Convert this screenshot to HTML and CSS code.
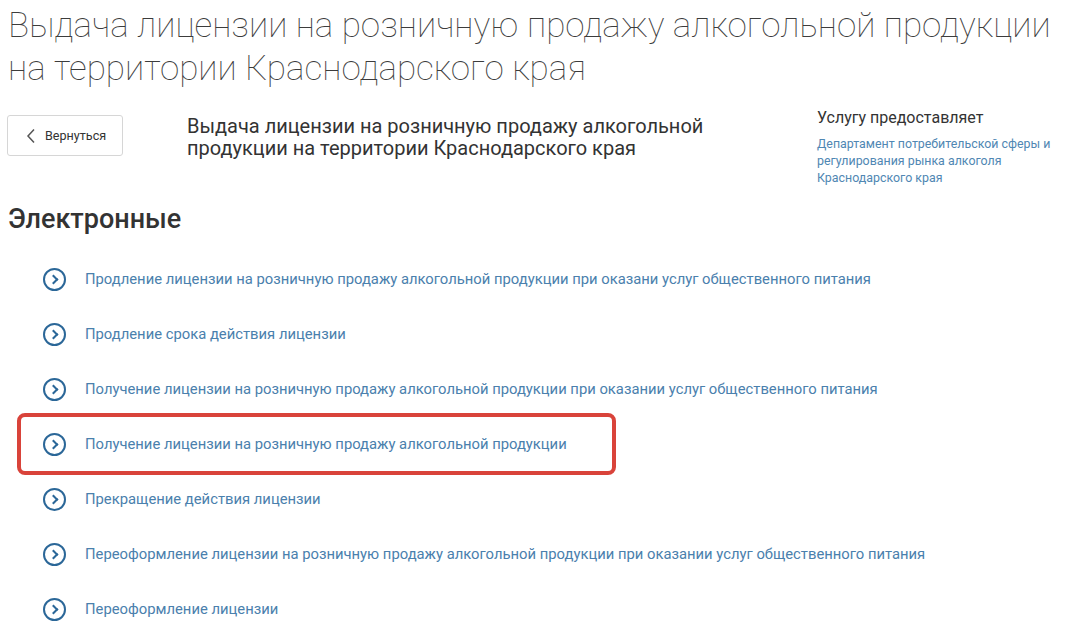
FILE: index.html
```html
<!DOCTYPE html>
<html lang="ru">
<head>
  <meta charset="UTF-8" />
  <meta name="viewport" content="width=device-width, initial-scale=1.0" />
  <title>Выдача лицензии</title>
  <link rel="stylesheet" href="styles.css">
</head>
<body>
  <div class="page">
    <h1 class="title">Выдача лицензии на розничную продажу алкогольной продукции на территории Краснодарского края</h1>

    <div class="info">
      <button class="btn-back">
        <svg width="10" height="16" viewBox="0 0 10 16"><path d="M8 1.5 L2 8 L8 14.5" fill="none" stroke="#555" stroke-width="1.5"/></svg>
        Вернуться
      </button>
      <div class="subtitle">Выдача лицензии на розничную продажу алкогольной продукции на территории Краснодарского края</div>
      <div class="provider">
        <div class="provider-label">Услугу предоставляет</div>
        <a class="provider-link" href="#">Департамент потребительской сферы и регулирования рынка алкоголя Краснодарского края</a>
      </div>
    </div>

    <h2 class="section">Электронные</h2>

    <ul class="services">
      <li><span class="arrow"></span><a href="#">Продление лицензии на розничную продажу алкогольной продукции при оказани услуг общественного питания</a></li>
      <li><span class="arrow"></span><a href="#">Продление срока действия лицензии</a></li>
      <li><span class="arrow"></span><a href="#">Получение лицензии на розничную продажу алкогольной продукции при оказании услуг общественного питания</a></li>
      <li class="marked"><span class="arrow"></span><a href="#">Получение лицензии на розничную продажу алкогольной продукции</a></li>
      <li><span class="arrow"></span><a href="#">Прекращение действия лицензии</a></li>
      <li><span class="arrow"></span><a href="#">Переоформление лицензии на розничную продажу алкогольной продукции при оказании услуг общественного питания</a></li>
      <li><span class="arrow"></span><a href="#">Переоформление лицензии</a></li>
    </ul>
  </div>
</body>
</html>
```

FILE: styles.css
```css
body {
  margin: 0;
  background: #ffffff;
  font-family: Roboto, "Liberation Sans", sans-serif;
  color: #333;
}
.page {
  padding: 4px 0 0 8px;
}
.title {
  margin: 0;
  font-size: 35px;
  line-height: 43px;
  font-weight: 100;
  color: #3c3c3c;
  width: 1060px;
}
.info {
  display: flex;
  align-items: flex-start;
  margin-top: 25px;
}
.btn-back {
  display: flex;
  align-items: center;
  gap: 9px;
  width: 116px;
  height: 41px;
  margin-left: -1px;
  padding: 0 0 0 18px;
  background: #fff;
  border: 1px solid #d6d6d6;
  border-radius: 3px;
  font-family: inherit;
  font-size: 12.6px;
  color: #333;
  cursor: pointer;
}
.subtitle {
  width: 560px;
  margin-left: 64px;
  font-size: 20px;
  line-height: 22px;
  color: #333;
}
.provider {
  margin-left: 70px;
  margin-top: -7px;
  width: 245px;
}
.provider-label {
  font-size: 16px;
  line-height: 20px;
  color: #333;
  margin-bottom: 6.5px;
}
.provider-link {
  display: block;
  font-size: 12.4px;
  line-height: 17px;
  color: #5087b3;
  text-decoration: none;
}
.section {
  margin: 17.5px 0 0;
  font-size: 27px;
  line-height: 32px;
  font-weight: 500;
  color: #333;
}
.services {
  list-style: none;
  margin: 16.5px 0 0;
  padding: 0 0 0 35px;
}
.services li {
  position: relative;
  display: flex;
  align-items: center;
  height: 55px;
}
.services a {
  font-size: 14.8px;
  color: #4a80ad;
  text-decoration: none;
}
.arrow {
  position: relative;
  width: 19px;
  height: 19px;
  margin-right: 19px;
  border: 2px solid #2b6798;
  border-radius: 50%;
  flex-shrink: 0;
}
.arrow::after {
  content: "";
  position: absolute;
  left: 4.5px;
  top: 6px;
  width: 5px;
  height: 5px;
  border-top: 2px solid #2b6798;
  border-right: 2px solid #2b6798;
  transform: rotate(45deg);
}
.marked::after {
  content: "";
  position: absolute;
  left: -26px;
  top: -3.5px;
  width: 599px;
  height: 62px;
  box-sizing: border-box;
  border: 4px solid #d9433a;
  border-radius: 8px;
}
```
